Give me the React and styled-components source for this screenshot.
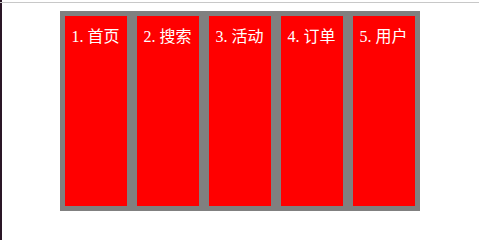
import React from "react";
import styled, { createGlobalStyle } from "styled-components";

const Global = createGlobalStyle`
  html, body { margin: 0; padding: 0; background: #fff; }
  body { font-family: "Liberation Serif", "Noto Sans CJK SC", serif; }
`;

const Page = styled.div`
  height: 100vh;
  box-sizing: border-box;
  box-shadow: inset 2px 0 0 #2a1626;
  padding-top: 2px;
  overflow: hidden;
`;

const Rule = styled.div`
  height: 1px;
  background: #c8c8c8;
`;

const Nav = styled.ul`
  list-style: none;
  margin: 8px auto 0;
  padding: 5px;
  width: 350px;
  height: 190px;
  background: #808080;
  display: flex;
  gap: 10px;
`;

const Item = styled.li`
  flex: 0 0 62px;
  background: #ff0000;
  color: #fff;
  font-size: 16px;
  text-align: center;
  padding-top: 7px;
  box-sizing: border-box;
`;

const items = ["1. 首页", "2. 搜索", "3. 活动", "4. 订单", "5. 用户"];

export default function App() {
  return (
    <>
      <Global />
      <Page>
        <Rule />
        <Nav>
          {items.map((t) => (
            <Item key={t}>{t}</Item>
          ))}
        </Nav>
      </Page>
    </>
  );
}
